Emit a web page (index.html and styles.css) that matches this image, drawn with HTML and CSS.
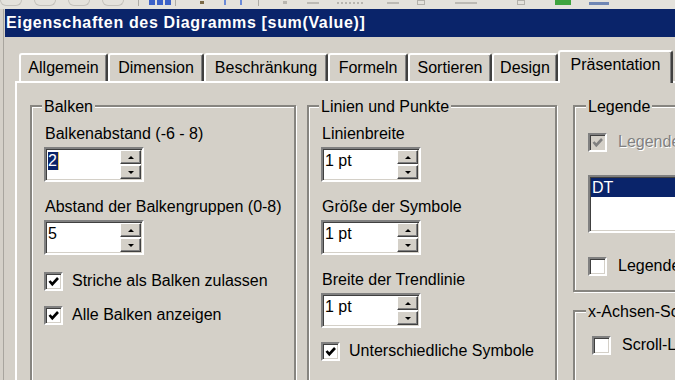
FILE: index.html
```html
<!DOCTYPE html>
<html lang="de">
<head>
<meta charset="utf-8">
<title>Eigenschaften des Diagramms</title>
<link rel="stylesheet" href="styles.css">
</head>
<body>
<div class="screen">
  <div class="toolbar">
    <span class="tb-round"></span>
    <span class="tb-round"></span>
    <span class="tb-round"></span>
    <span class="tb-round"></span>
    <span class="tb-sep"></span>
    <span class="tb-blue"></span><span class="tb-blue"></span><span class="tb-blue"></span>
    <span class="tb-sep"></span>
    <span class="tb-dot dark"></span>
    <span class="tb-tick"></span>
    <span class="tb-tick"></span>
    <span class="tb-sep"></span>
    <span class="tb-dot"></span>
    <span class="tb-dash"></span>
    <span class="tb-dots"></span>
    <span class="tb-dash"></span>
    <span class="tb-box"></span>
    <span class="tb-dash wide"></span>
    <span class="tb-box"></span>
    <span class="tb-green"></span>
    <span class="tb-bluebar"></span>
  </div>
  <div class="window">
    <div class="titlebar">Eigenschaften des Diagramms [sum(Value)]</div>
    <div class="tabs">
      <div class="tab w-allg">Allgemein</div>
      <div class="tab w-dim">Dimension</div>
      <div class="tab w-bes">Beschränkung</div>
      <div class="tab w-form">Formeln</div>
      <div class="tab w-sort">Sortieren</div>
      <div class="tab w-des">Design</div>
      <div class="tab w-pres active">Präsentation</div>
    </div>
    <div class="panel">
      <div class="group g-balken">
        <span class="legend">Balken</span>
        <div class="label">Balkenabstand (-6 - 8)</div>
        <div class="spin">
          <div class="spin-text"><span class="sel">2</span></div>
          <div class="spin-btns"><span class="sb up"></span><span class="sb down"></span></div>
        </div>
        <div class="label">Abstand der Balkengruppen (0-8)</div>
        <div class="spin">
          <div class="spin-text">5</div>
          <div class="spin-btns"><span class="sb up"></span><span class="sb down"></span></div>
        </div>
        <div class="cbrow first-balken">
          <span class="cb"><svg viewBox="0 0 13 13" width="13" height="13"><polyline points="2.5,6 5.3,9.2 11,3" fill="none" stroke="#000" stroke-width="2.6"/></svg></span>
          <span>Striche als Balken zulassen</span>
        </div>
        <div class="cbrow">
          <span class="cb"><svg viewBox="0 0 13 13" width="13" height="13"><polyline points="2.5,6 5.3,9.2 11,3" fill="none" stroke="#000" stroke-width="2.6"/></svg></span>
          <span>Alle Balken anzeigen</span>
        </div>
      </div>
      <div class="group g-linien">
        <span class="legend">Linien und Punkte</span>
        <div class="label">Linienbreite</div>
        <div class="spin">
          <div class="spin-text">1 pt</div>
          <div class="spin-btns"><span class="sb up"></span><span class="sb down"></span></div>
        </div>
        <div class="label">Größe der Symbole</div>
        <div class="spin">
          <div class="spin-text">1 pt</div>
          <div class="spin-btns"><span class="sb up"></span><span class="sb down"></span></div>
        </div>
        <div class="label">Breite der Trendlinie</div>
        <div class="spin">
          <div class="spin-text">1 pt</div>
          <div class="spin-btns"><span class="sb up"></span><span class="sb down"></span></div>
        </div>
        <div class="cbrow first-linien">
          <span class="cb"><svg viewBox="0 0 13 13" width="13" height="13"><polyline points="2.5,6 5.3,9.2 11,3" fill="none" stroke="#000" stroke-width="2.6"/></svg></span>
          <span>Unterschiedliche Symbole</span>
        </div>
      </div>
      <div class="col-right">
        <div class="group g-legende">
          <span class="legend">Legende</span>
          <div class="cbrow disabled first-legende">
            <span class="cb"><svg viewBox="0 0 13 13" width="13" height="13"><polyline points="2.5,6 5.3,9.2 11,3" fill="none" stroke="#808080" stroke-width="2.6"/></svg></span>
            <span>Legende anzeigen</span>
          </div>
          <div class="listbox">
            <div class="lb-sel">DT</div>
          </div>
          <div class="cbrow after-list">
            <span class="cb"></span>
            <span>Legende begrenzen</span>
          </div>
        </div>
        <div class="group g-xachse">
          <span class="legend">x-Achsen-Scrollleiste</span>
          <div class="cbrow">
            <span class="cb"></span>
            <span>Scroll-Leiste aktivieren</span>
          </div>
        </div>
      </div>
    </div>
  </div>
</div>
</body>
</html>
```
FILE: styles.css
```css
* { box-sizing: border-box; }
html, body { margin: 0; padding: 0; }
body {
  background: #d4d0c8;
  font-family: "Liberation Sans", Arial, sans-serif;
  font-size: 16px;
  color: #000;
}
.screen {
  width: 675px;
  height: 380px;
  overflow: hidden;
  background: #d4d0c8;
}

/* faint toolbar strip at the very top */
.toolbar {
  height: 9px;
  background: #e4e2dc;
  display: flex;
  align-items: flex-start;
  overflow: hidden;
}
.tb-round {
  width: 22px; height: 6px;
  border: 1px solid #c4c2bc; border-top: none;
  border-radius: 0 0 7px 7px;
  margin-right: 12px;
  flex: none;
}
.tb-sep { width: 1px; height: 6px; background: #aeaca6; margin: 0 10px 0 2px; flex: none; }
.tb-blue { width: 6px; height: 5px; background: #3c62c8; margin-right: 2px; flex: none; }
.tb-dot { width: 4px; height: 3px; background: #b8b6b0; margin: 1px 20px 0 14px; flex: none; }
.tb-dot.dark { background: #7a6a48; }
.tb-tick { width: 2px; height: 5px; background: #6a8ad8; margin-right: 14px; flex: none; }
.tb-dash { width: 12px; height: 2px; background: #bcbab4; margin: 2px 18px 0 0; flex: none; }
.tb-dash.wide { width: 22px; margin-right: 40px; }
.tb-dots { width: 26px; height: 2px; border-top: 2px dotted #b8b6b0; margin: 2px 24px 0 0; flex: none; }
.tb-box { width: 8px; height: 5px; border: 1px solid #b4b2ac; margin-right: 30px; flex: none; }
.tb-green { width: 16px; height: 5px; background: #3ea43e; margin: 0 18px 0 0; flex: none; }
.tb-bluebar { width: 20px; height: 3px; background: #6f86b4; margin-top: 2px; flex: none; }

/* dialog window */
.window {
  margin-left: 3px;
  border-left: 1px solid #a8a59e;
  padding-left: 1px;
  height: 371px;
}
.titlebar {
  height: 28px;
  background: #0a246a;
  color: #fff;
  font-weight: bold;
  font-size: 16px;
  letter-spacing: 0.65px;
  line-height: 28px;
  padding-left: 1px;
  white-space: nowrap;
  overflow: hidden;
}

/* tabs */
.tabs {
  display: flex;
  align-items: flex-end;
  height: 31px;
  margin-top: 13px;
  padding-left: 14px;
  position: relative;
  z-index: 1;
}
.tab {
  flex: none;
  height: 28px;
  border-top: 2px solid #fff;
  border-left: 2px solid #fff;
  border-right: 2px solid #404040;
  border-radius: 3px 3px 0 0;
  box-shadow: inset -1px 0 0 #808080;
  padding-top: 3px;
  line-height: 20px;
  text-align: center;
  white-space: nowrap;
  background: #d4d0c8;
}
.tab.active {
  height: 33px;
  margin-bottom: -2px;
  position: relative;
  z-index: 2;
}
.w-allg { width: 89px; }
.w-dim { width: 96px; }
.w-bes { width: 124px; }
.w-form { width: 80px; }
.w-sort { width: 84px; }
.w-des { width: 66px; }
.w-pres { width: 115px; }

/* tab panel */
.panel {
  margin-left: 10px;
  width: 700px;
  height: 320px;
  border-top: 2px solid #fff;
  border-left: 2px solid #fff;
  padding: 22px 0 0 13px;
  display: flex;
  align-items: flex-start;
}

/* group boxes */
.group {
  position: relative;
  flex: none;
  border: 2px solid #878580;
  box-shadow: inset 1px 1px 0 #fff, 1px 1px 0 #fff;
  padding: 17px 12px 0 12px;
}
.legend {
  position: absolute;
  top: -10px;
  left: 10px;
  padding: 0 2px;
  line-height: 20px;
  background: #d4d0c8;
  white-space: nowrap;
}
.g-balken { width: 266px; height: 300px; margin-right: 11px; }
.g-linien { width: 250px; height: 300px; margin-right: 16px; }
.col-right { flex: none; width: 160px; display: flex; flex-direction: column; }
.g-legende { width: 160px; height: 187px; padding: 24px 0 0 13px; }
.g-xachse { width: 160px; height: 120px; margin-top: 18px; padding: 22px 0 0 17px; }
.g-legende .legend, .g-xachse .legend { left: 11px; }

.label {
  line-height: 20px;
  margin: 0 0 3px 1px;
  white-space: nowrap;
}

/* spinner (edit + up/down) */
.spin {
  width: 100px;
  height: 35px;
  display: flex;
  padding: 1px;
  border: 2px solid;
  border-color: #808080 #fff #fff #808080;
  box-shadow: inset 1px 1px 0 #404040, inset -1px -1px 0 #d4d0c8;
  background: #fff;
  margin-bottom: 15px;
}
.spin-text {
  flex: 1;
  line-height: 20px;
  padding: 1px 0 0 1px;
  white-space: nowrap;
}
.sel {
  display: inline-block;
  background: #0a246a;
  color: #fff;
  line-height: 18px;
  padding: 0 1px 0 0;
  margin-top: 1px;
  border-right: 1px solid #e0c868;
}
.spin-btns {
  width: 21px;
  display: flex;
  flex-direction: column;
  gap: 1px;
}
.sb {
  flex: 1;
  background: #d4d0c8;
  border: 1px solid;
  border-color: #fff #404040 #404040 #fff;
  box-shadow: inset -1px -1px 0 #808080;
  display: flex;
  align-items: center;
  justify-content: center;
}
.sb::after {
  content: "";
  width: 0; height: 0;
  border-left: 3px solid transparent;
  border-right: 3px solid transparent;
}
.sb.up::after { border-bottom: 3px solid #000; }
.sb.down::after { border-top: 3px solid #000; }

/* checkboxes */
.cbrow {
  display: flex;
  align-items: center;
  height: 22px;
  line-height: 20px;
  white-space: nowrap;
  margin-bottom: 12px;
}
.first-balken { margin-top: 4px; }
.first-linien { margin-top: -3px; }
.after-list { margin-top: 22px; }
.cb {
  flex: none;
  width: 19px;
  height: 19px;
  border: 2px solid;
  border-color: #808080 #fff #fff #808080;
  box-shadow: inset 1px 1px 0 #404040, inset -1px -1px 0 #d4d0c8;
  background: #fff;
  margin-right: 9px;
  display: flex;
  align-items: center;
  justify-content: center;
}
.cb svg { display: block; }
.g-legende .cb, .g-xachse .cb { margin-right: 11px; }
.disabled .cb { background: #d4d0c8; }
.disabled span:last-child { color: #808080; text-shadow: 1px 1px 0 #fff; }

/* list box */
.listbox {
  width: 120px;
  height: 58px;
  margin-top: 0;
  padding: 1px;
  border: 2px solid;
  border-color: #808080 #fff #fff #808080;
  box-shadow: inset 1px 1px 0 #404040, inset -1px -1px 0 #d4d0c8;
  background: #fff;
}
.first-legende { margin-bottom: 22px; }
.lb-sel {
  background: #0a246a;
  color: #fff;
  line-height: 19px;
  padding-left: 1px;
}
```
